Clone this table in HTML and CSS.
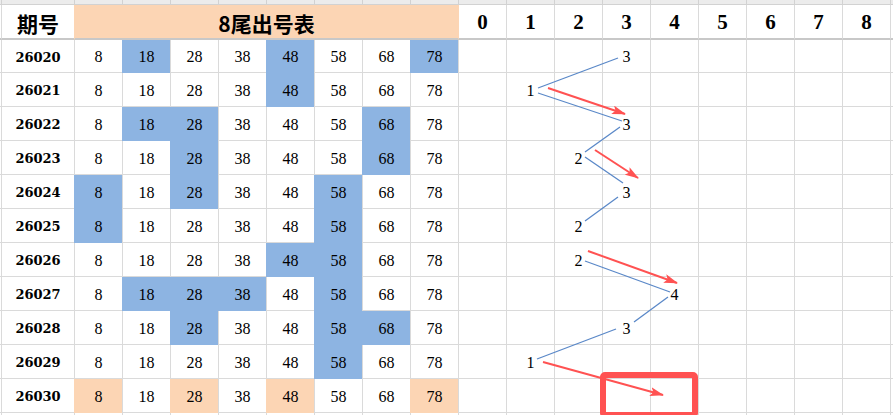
FILE: index.html
```html
<!DOCTYPE html>
<html lang="zh">
<head>
<meta charset="utf-8">
<title>8尾出号表</title>
<link rel="stylesheet" href="styles.css">
</head>
<body>
<div class="sheet">
  <div class="row top">
    <div class="sp"></div><div class="cell"></div>
    <div class="cell"></div><div class="cell"></div><div class="cell"></div><div class="cell"></div><div class="cell"></div><div class="cell"></div><div class="cell"></div><div class="cell"></div>
    <div class="cell"></div><div class="cell"></div><div class="cell"></div><div class="cell"></div><div class="cell"></div><div class="cell"></div><div class="cell"></div><div class="cell"></div><div class="cell"></div><div class="cell"></div>
  </div>
  <div class="row head">
    <div class="sp"></div>
    <div class="cell cj">期号</div>
    <div class="cell cj merge">8尾出号表</div>
    <div class="cell hd after">0</div><div class="cell hd">1</div><div class="cell hd">2</div><div class="cell hd">3</div><div class="cell hd">4</div><div class="cell hd">5</div><div class="cell hd">6</div><div class="cell hd">7</div><div class="cell hd">8</div><div class="cell"></div>
  </div>

  <div class="row data first">
    <div class="sp"></div><div class="cell pid">26020</div>
    <div class="cell">8</div><div class="cell b">18</div><div class="cell">28</div><div class="cell">38</div><div class="cell b">48</div><div class="cell">58</div><div class="cell">68</div><div class="cell b">78</div>
    <div class="cell"></div><div class="cell"></div><div class="cell"></div><div class="cell">3</div><div class="cell"></div><div class="cell"></div><div class="cell"></div><div class="cell"></div><div class="cell"></div><div class="cell"></div>
  </div>
  <div class="row data">
    <div class="sp"></div><div class="cell pid">26021</div>
    <div class="cell">8</div><div class="cell">18</div><div class="cell">28</div><div class="cell">38</div><div class="cell b">48</div><div class="cell">58</div><div class="cell">68</div><div class="cell">78</div>
    <div class="cell"></div><div class="cell">1</div><div class="cell"></div><div class="cell"></div><div class="cell"></div><div class="cell"></div><div class="cell"></div><div class="cell"></div><div class="cell"></div><div class="cell"></div>
  </div>
  <div class="row data">
    <div class="sp"></div><div class="cell pid">26022</div>
    <div class="cell">8</div><div class="cell b">18</div><div class="cell b">28</div><div class="cell">38</div><div class="cell">48</div><div class="cell">58</div><div class="cell b">68</div><div class="cell">78</div>
    <div class="cell"></div><div class="cell"></div><div class="cell"></div><div class="cell">3</div><div class="cell"></div><div class="cell"></div><div class="cell"></div><div class="cell"></div><div class="cell"></div><div class="cell"></div>
  </div>
  <div class="row data">
    <div class="sp"></div><div class="cell pid">26023</div>
    <div class="cell">8</div><div class="cell">18</div><div class="cell b">28</div><div class="cell">38</div><div class="cell">48</div><div class="cell">58</div><div class="cell b">68</div><div class="cell">78</div>
    <div class="cell"></div><div class="cell"></div><div class="cell">2</div><div class="cell"></div><div class="cell"></div><div class="cell"></div><div class="cell"></div><div class="cell"></div><div class="cell"></div><div class="cell"></div>
  </div>
  <div class="row data">
    <div class="sp"></div><div class="cell pid">26024</div>
    <div class="cell b">8</div><div class="cell">18</div><div class="cell b">28</div><div class="cell">38</div><div class="cell">48</div><div class="cell b">58</div><div class="cell">68</div><div class="cell">78</div>
    <div class="cell"></div><div class="cell"></div><div class="cell"></div><div class="cell">3</div><div class="cell"></div><div class="cell"></div><div class="cell"></div><div class="cell"></div><div class="cell"></div><div class="cell"></div>
  </div>
  <div class="row data">
    <div class="sp"></div><div class="cell pid">26025</div>
    <div class="cell b">8</div><div class="cell">18</div><div class="cell">28</div><div class="cell">38</div><div class="cell">48</div><div class="cell b">58</div><div class="cell">68</div><div class="cell">78</div>
    <div class="cell"></div><div class="cell"></div><div class="cell">2</div><div class="cell"></div><div class="cell"></div><div class="cell"></div><div class="cell"></div><div class="cell"></div><div class="cell"></div><div class="cell"></div>
  </div>
  <div class="row data">
    <div class="sp"></div><div class="cell pid">26026</div>
    <div class="cell">8</div><div class="cell">18</div><div class="cell">28</div><div class="cell">38</div><div class="cell b">48</div><div class="cell b">58</div><div class="cell">68</div><div class="cell">78</div>
    <div class="cell"></div><div class="cell"></div><div class="cell">2</div><div class="cell"></div><div class="cell"></div><div class="cell"></div><div class="cell"></div><div class="cell"></div><div class="cell"></div><div class="cell"></div>
  </div>
  <div class="row data">
    <div class="sp"></div><div class="cell pid">26027</div>
    <div class="cell">8</div><div class="cell b">18</div><div class="cell b">28</div><div class="cell b">38</div><div class="cell">48</div><div class="cell b">58</div><div class="cell">68</div><div class="cell">78</div>
    <div class="cell"></div><div class="cell"></div><div class="cell"></div><div class="cell"></div><div class="cell">4</div><div class="cell"></div><div class="cell"></div><div class="cell"></div><div class="cell"></div><div class="cell"></div>
  </div>
  <div class="row data">
    <div class="sp"></div><div class="cell pid">26028</div>
    <div class="cell">8</div><div class="cell">18</div><div class="cell b">28</div><div class="cell">38</div><div class="cell">48</div><div class="cell b">58</div><div class="cell b">68</div><div class="cell">78</div>
    <div class="cell"></div><div class="cell"></div><div class="cell"></div><div class="cell">3</div><div class="cell"></div><div class="cell"></div><div class="cell"></div><div class="cell"></div><div class="cell"></div><div class="cell"></div>
  </div>
  <div class="row data">
    <div class="sp"></div><div class="cell pid">26029</div>
    <div class="cell">8</div><div class="cell">18</div><div class="cell">28</div><div class="cell">38</div><div class="cell">48</div><div class="cell b">58</div><div class="cell">68</div><div class="cell">78</div>
    <div class="cell"></div><div class="cell">1</div><div class="cell"></div><div class="cell"></div><div class="cell"></div><div class="cell"></div><div class="cell"></div><div class="cell"></div><div class="cell"></div><div class="cell"></div>
  </div>
  <div class="row data">
    <div class="sp"></div><div class="cell pid">26030</div>
    <div class="cell o">8</div><div class="cell">18</div><div class="cell o">28</div><div class="cell">38</div><div class="cell o">48</div><div class="cell">58</div><div class="cell">68</div><div class="cell o">78</div>
    <div class="cell"></div><div class="cell"></div><div class="cell"></div><div class="cell"></div><div class="cell"></div><div class="cell"></div><div class="cell"></div><div class="cell"></div><div class="cell"></div><div class="cell"></div>
  </div>
  <div class="row tail">
    <div class="sp"></div><div class="cell"></div>
    <div class="cell"></div><div class="cell"></div><div class="cell"></div><div class="cell"></div><div class="cell"></div><div class="cell"></div><div class="cell"></div><div class="cell"></div>
    <div class="cell"></div><div class="cell"></div><div class="cell"></div><div class="cell"></div><div class="cell"></div><div class="cell"></div><div class="cell"></div><div class="cell"></div><div class="cell"></div><div class="cell"></div>
  </div>

  <svg class="overlay" width="893" height="415" viewBox="0 0 893 415">
    <defs>
      <marker id="ah" markerUnits="userSpaceOnUse" markerWidth="14" markerHeight="9" refX="13" refY="4.5" orient="auto">
        <path d="M0,0 L14,4.5 L0,9 L3,4.5 Z" fill="#ff5252"/>
      </marker>
    </defs>
    <g class="blue">
      <line x1="618" y1="58" x2="538" y2="88"/>
      <line x1="538" y1="93" x2="622" y2="121"/>
      <line x1="620" y1="127" x2="585" y2="152"/>
      <line x1="585" y1="157" x2="623" y2="183"/>
      <line x1="618" y1="197" x2="585" y2="221"/>
      <line x1="585" y1="261" x2="670" y2="292"/>
      <line x1="668" y1="297" x2="634" y2="322"/>
      <line x1="616" y1="329" x2="537" y2="359"/>
    </g>
    <g class="red">
      <line x1="548" y1="88" x2="625" y2="114" marker-end="url(#ah)"/>
      <line x1="595" y1="150" x2="638" y2="178" marker-end="url(#ah)"/>
      <line x1="588" y1="251" x2="677" y2="283" marker-end="url(#ah)"/>
      <line x1="543" y1="362" x2="663" y2="395" marker-end="url(#ah)"/>
    </g>
    <rect class="box" x="603" y="375" width="92" height="40" rx="2"/>
  </svg>
</div>
</body>
</html>
```
FILE: styles.css
```css
* {
  box-sizing: border-box;
}
html, body {
  margin: 0;
  padding: 0;
  background: #fff;
}
.sheet {
  position: relative;
  width: 893px;
  height: 415px;
  overflow: hidden;
}
.row {
  display: grid;
  grid-template-columns: 1px 73px repeat(17, 48px) 1fr;
}
.sp {
  border-bottom: 1px solid #dadada;
}
.cell {
  display: flex;
  align-items: center;
  justify-content: center;
  border-left: 1px solid #dadada;
  border-bottom: 1px solid #dadada;
  font-family: "Liberation Serif", serif;
  font-size: 16px;
  color: #000;
  white-space: nowrap;
}
.top {
  height: 5px;
}
.top .cell, .top .sp {
  background: #ececec;
  border-color: #d2d2d2;
}
.head {
  height: 35px;
}
.head .cell, .head .sp {
  border-bottom: 2px solid #c8c8c8;
}
.head .cell {
  padding-top: 2px;
}
.cj {
  font-family: "Noto Sans CJK SC", sans-serif;
  font-weight: 700;
  font-size: 21px;
}
.merge {
  grid-column: span 8;
  background: #fcd5b4;
  border-left-color: #fcd5b4;
}
.head .after {
  border-left-color: #fcd5b4;
}
.hd {
  font-family: "Liberation Serif", serif;
  font-weight: 700;
  font-size: 21px;
}
.data {
  height: 34px;
}
.data .cell {
  padding-top: 2px;
}
.data.first {
  height: 33px;
}
.tail {
  height: 10px;
}
.pid {
  font-family: "DejaVu Serif", serif;
  font-weight: 700;
  font-size: 13px;
}
.b {
  background: #8db4e2;
  border-left-color: #8db4e2;
  border-bottom-color: #8db4e2;
}
.o {
  background: #fcd5b4;
  border-left-color: #fcd5b4;
  border-bottom-color: #fcd5b4;
}
.overlay {
  position: absolute;
  top: 0;
  left: 0;
  pointer-events: none;
}
.blue line {
  stroke: #5a88c8;
  stroke-width: 1.3;
}
.red line {
  stroke: #ff5252;
  stroke-width: 2;
}
.box {
  fill: none;
  stroke: #ff5252;
  stroke-width: 6;
}
```
